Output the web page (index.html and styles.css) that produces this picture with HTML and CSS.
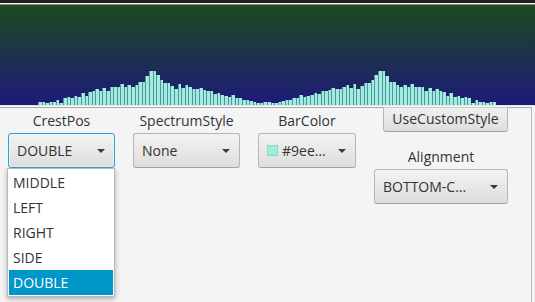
FILE: index.html
```html
<!DOCTYPE html>
<html>
<head>
<meta charset="utf-8">
<link rel="stylesheet" href="styles.css">
</head>
<body>
<div class="app">
  <div class="topstrip"></div>
  <div class="canvas"><div class="bars" id="bars"></div></div>
  <div class="divider"></div>
  <div class="pane">
    <div class="col col-crest">
      <div class="label">CrestPos</div>
      <div class="combo-wrap">
        <div class="combo focused"><span class="txt">DOUBLE</span><span class="arrow"></span></div>
        <ul class="popup">
          <li class="item">MIDDLE</li>
          <li class="item">LEFT</li>
          <li class="item">RIGHT</li>
          <li class="item">SIDE</li>
          <li class="item selected">DOUBLE</li>
        </ul>
      </div>
    </div>
    <div class="col col-style">
      <div class="label">SpectrumStyle</div>
      <div class="combo"><span class="txt">None</span><span class="arrow"></span></div>
    </div>
    <div class="col col-color">
      <div class="label">BarColor</div>
      <div class="combo"><span class="swatch"></span><span class="txt">#9ee…</span><span class="arrow"></span></div>
    </div>
    <div class="col col-align">
      <div class="button">UseCustomStyle</div>
      <div class="label label-align">Alignment</div>
      <div class="combo"><span class="txt">BOTTOM-C…</span><span class="arrow"></span></div>
    </div>
  </div>
</div>
<script src="script.js"></script>
</body>
</html>
```

FILE: styles.css
```css
* { box-sizing: border-box; }
html, body { margin: 0; padding: 0; }
body {
  background: #f4f4f4;
  font-family: "Open Sans", "Noto Sans", sans-serif;
  font-size: 14px;
  color: #333;
}
.app {
  width: 535px;
  height: 302px;
  overflow: hidden;
  display: flex;
  flex-direction: column;
}
.topstrip {
  height: 5px;
  flex: none;
  background: linear-gradient(to bottom, #1e1e1e 0, #1e1e1e 3px, #f2f2f2 3px, #f2f2f2 4px, #8c8c8c 4px, #8c8c8c 5px);
}
.canvas {
  height: 100px;
  flex: none;
  background: linear-gradient(to bottom, #1c4b1c, #1d1a7a);
  display: flex;
  align-items: flex-end;
  padding-left: 38px;
}
.bars {
  width: 458px;
  height: 100%;
  display: flex;
  align-items: flex-end;
}
.bar {
  flex: 1;
  background: #9eeedd;
  border-left: 1px solid #5a8ea0;
}
.divider {
  height: 2px;
  flex: none;
  background: linear-gradient(to bottom, #e4e4e4 0, #e4e4e4 1px, #fbfbfb 1px);
}
.pane {
  flex: 1;
  border-top: 1px solid #a9a9a9;
  border-right: 1px solid #b9b9b9;
  margin-right: 3px;
  display: flex;
  gap: 18px;
  padding-left: 8px;
}
.col {
  display: flex;
  flex-direction: column;
}
.col-crest, .col-style { width: 107px; }
.col-color { width: 98px; }
.col-align { width: 134px; margin-top: -1px; align-items: flex-end; }
.label {
  height: 20px;
  line-height: 20px;
  margin-top: 3px;
  text-align: center;
}
.col-align .label, .col-align .combo { align-self: stretch; }
.label-align { margin-top: 15px; }
.combo-wrap { position: relative; margin-top: 2px; }
.combo {
  height: 35px;
  border: 1px solid #b6b6b6;
  border-bottom-color: #a4a4a4;
  border-radius: 3px;
  background: linear-gradient(to bottom, #f3f3f3, #dddddd);
  display: flex;
  align-items: center;
  padding: 0 9px 0 8px;
  margin-top: 2px;
}
.combo-wrap .combo { margin-top: 0; }
.combo.focused {
  border-color: #2ea2d6;
  box-shadow: inset 0 0 0 1px #eaf4fa;
}
.txt { flex: 1; white-space: nowrap; }
.swatch {
  width: 11px;
  height: 11px;
  background: #9eeedd;
  border: 1px solid #8fd8c8;
  margin-right: 4px;
  flex: none;
}
.arrow {
  flex: none;
  width: 0;
  height: 0;
  border-left: 4px solid transparent;
  border-right: 4px solid transparent;
  border-top: 4.5px solid #3a3a3a;
}
.button {
  width: 125px;
  height: 25px;
  border: 1px solid #b6b6b6;
  border-top-color: #c8c8c8;
  border-bottom-color: #a4a4a4;
  border-radius: 0 0 3px 3px;
  background: linear-gradient(to bottom, #f0f0f0, #dedede);
  text-align: center;
  line-height: 22px;
}
.popup {
  position: absolute;
  left: -1px;
  top: 100%;
  width: 108px;
  margin: 0;
  padding: 1px 1px;
  list-style: none;
  background: #fff;
  border: 1px solid #b8b8b8;
  box-shadow: 0 2px 5px rgba(0, 0, 0, 0.3);
}
.item {
  height: 25px;
  line-height: 25px;
  padding-left: 4px;
}
.item.selected {
  background: #0096c9;
  color: #fff;
}
```

FILE: script.js
```js
var L = [2.7,2.7,1.7,2.7,2.7,5.3,1.7,6.7,8,7,9.3,7.7,11.7,8.7,13,13.7,16,14.3,17,14.3,17.7,17.7,18.3,21.3,18,19.7,18.3,19.7,23.3,22.7,28.7,34,34,30.3,25.3,22.3,22.3,18.7,15.7,21.3,17,20.3,17.7,16.3,16.3,17,15.3,14.3,13.7,10.7,11.7,10.3,9.3,7.7,9.7,7,7,4.7,4.7,3.7,3,1.7,1.7,2.7];
var data = L.concat(L.slice().reverse());
var bars = document.getElementById('bars');
data.forEach(function (h) {
  var d = document.createElement('div');
  d.className = 'bar';
  d.style.height = h + 'px';
  bars.appendChild(d);
});
```
